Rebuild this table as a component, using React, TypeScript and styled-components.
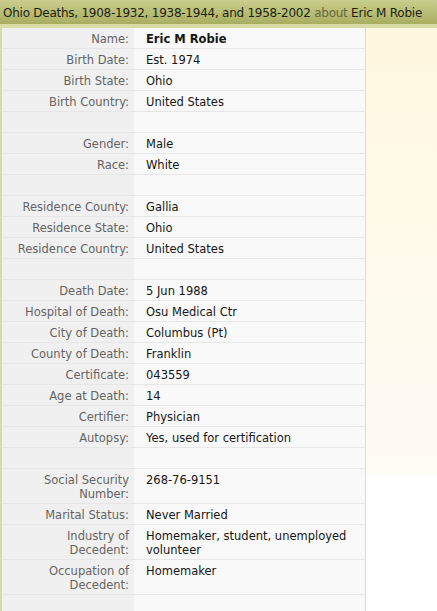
import styled, { createGlobalStyle } from "styled-components"

const GlobalStyle = createGlobalStyle`
    html, body {
        margin: 0;
        padding: 0;
        background: #fff;
    }
    body {
        font-family: "DejaVu Sans", Verdana, sans-serif;
    }
`

const Page = styled.div`
    width: 437px;
    height: 611px;
    overflow: hidden;
    display: flex;
    flex-direction: column;
`

const Header = styled.div`
    flex-shrink: 0;
    height: 24px;
    box-sizing: border-box;
    padding: 5px 3px 0;
    background: linear-gradient(#c9cd8e, #a8ae60);
    color: #1e1e10;
    font-size: 12px;
    letter-spacing: -0.25px;
    line-height: 16px;
    white-space: nowrap;
    .about {
        color: #66663a;
    }
`

const SubStrip = styled.div`
    flex-shrink: 0;
    height: 4px;
    background: #d7dca7;
`

const Body = styled.div`
    flex: 1;
    min-height: 0;
    display: flex;
    align-items: flex-start;
    border-left: 2px solid #d5dba5;
`

const Records = styled.table`
    flex-shrink: 0;
    width: 364px;
    border-collapse: collapse;
    border-right: 1px solid #dcdcdc;
    font-size: 11.5px;
    line-height: 14px;
`

const Row = styled.tr`
    border-bottom: 1px solid #e6e6e6;
`

const Label = styled.td`
    width: 119px;
    background: #f0f0f0;
    color: #646464;
    text-align: right;
    vertical-align: top;
    padding: 4px 5px 2px 8px;
    height: 14px;
`

const Value = styled.td<{ $strong?: boolean }>`
    background: #f9f9f9;
    color: #161616;
    vertical-align: top;
    padding: 4px 6px 2px 12px;
    font-weight: ${p => (p.$strong ? "bold" : "normal")};
`

const Side = styled.div`
    flex: 1;
    height: 447px;
    background: linear-gradient(#fff7df, #fffcf6);
`

type Item = [string, string] | null

const items: Item[] = [
    ["Name:", "Eric M Robie"],
    ["Birth Date:", "Est. 1974"],
    ["Birth State:", "Ohio"],
    ["Birth Country:", "United States"],
    null,
    ["Gender:", "Male"],
    ["Race:", "White"],
    null,
    ["Residence County:", "Gallia"],
    ["Residence State:", "Ohio"],
    ["Residence Country:", "United States"],
    null,
    ["Death Date:", "5 Jun 1988"],
    ["Hospital of Death:", "Osu Medical Ctr"],
    ["City of Death:", "Columbus (Pt)"],
    ["County of Death:", "Franklin"],
    ["Certificate:", "043559"],
    ["Age at Death:", "14"],
    ["Certifier:", "Physician"],
    ["Autopsy:", "Yes, used for certification"],
    null,
    ["Social Security Number:", "268-76-9151"],
    ["Marital Status:", "Never Married"],
    ["Industry of Decedent:", "Homemaker, student, unemployed volunteer"],
    ["Occupation of Decedent:", "Homemaker"],
    null,
]

export default function App() {
    return (
        <>
            <GlobalStyle />
            <Page>
                <Header>
                    Ohio Deaths, 1908-1932, 1938-1944, and 1958-2002{" "}
                    <span className="about">about</span> Eric M Robie
                </Header>
                <SubStrip />
                <Body>
                    <Records>
                        <tbody>
                            {items.map((item, i) => (
                                <Row key={i}>
                                    <Label>{item ? item[0] : ""}</Label>
                                    <Value $strong={i === 0}>{item ? item[1] : ""}</Value>
                                </Row>
                            ))}
                        </tbody>
                    </Records>
                    <Side />
                </Body>
            </Page>
        </>
    )
}
